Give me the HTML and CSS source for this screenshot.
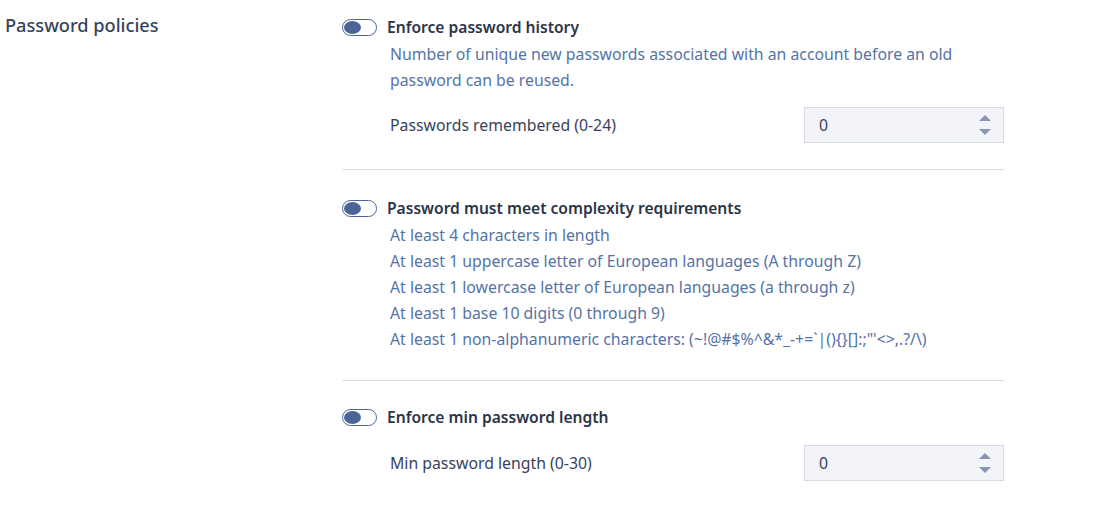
FILE: index.html
```html
<!DOCTYPE html>
<html>
<head>
<meta charset="utf-8">
<link rel="stylesheet" href="styles.css">
</head>
<body>
<div class="page">
  <div class="side-label">Password policies</div>
  <div class="policies">
    <section class="policy first">
      <div class="policy-head">
        <span class="toggle"><span class="knob"></span></span>
        <span class="policy-title">Enforce password history</span>
      </div>
      <div class="policy-body">
        <p class="desc">Number of unique new passwords associated with an account before an old password can be reused.</p>
        <div class="field">
          <span class="field-label">Passwords remembered (0-24)</span>
          <div class="num-input"><span class="num-value">0</span><span class="spin"><span class="up"></span><span class="down"></span></span></div>
        </div>
      </div>
    </section>
    <section class="policy second">
      <div class="policy-head">
        <span class="toggle"><span class="knob"></span></span>
        <span class="policy-title">Password must meet complexity requirements</span>
      </div>
      <ul class="reqs">
        <li>At least 4 characters in length</li>
        <li>At least 1 uppercase letter of European languages (A through Z)</li>
        <li>At least 1 lowercase letter of European languages (a through z)</li>
        <li>At least 1 base 10 digits (0 through 9)</li>
        <li>At least 1 non-alphanumeric characters: (~!@#$%^&amp;*_-+=`|(){}[]:;"'&lt;&gt;,.?/\)</li>
      </ul>
    </section>
    <section class="policy third">
      <div class="policy-head">
        <span class="toggle"><span class="knob"></span></span>
        <span class="policy-title">Enforce min password length</span>
      </div>
      <div class="policy-body">
        <div class="field">
          <span class="field-label">Min password length (0-30)</span>
          <div class="num-input"><span class="num-value">0</span><span class="spin"><span class="up"></span><span class="down"></span></span></div>
        </div>
      </div>
    </section>
  </div>
</div>
</body>
</html>
```
FILE: styles.css
```css
html, body {
  margin: 0;
  padding: 0;
  background: #ffffff;
}
body {
  font-family: "Noto Sans", "Liberation Sans", sans-serif;
  color: #2f3b52;
}
.page {
  display: grid;
  grid-template-columns: 342px 662px;
}
.side-label {
  padding-left: 5px;
  padding-top: 13px;
  font-size: 18.2px;
  line-height: 24px;
  font-weight: 500;
  color: #36435c;
}
.policy {
  border-bottom: 1px solid #dadde5;
}
.policy.third {
  border-bottom: none;
}
.policy.first {
  padding-top: 15px;
  padding-bottom: 26px;
}
.policy.second {
  padding-top: 26px;
  padding-bottom: 28px;
}
.policy.third {
  padding-top: 24px;
}
.policy-head {
  display: flex;
  align-items: center;
  height: 24px;
  gap: 10px;
}
.toggle {
  position: relative;
  width: 33px;
  height: 15px;
  border: 1.5px solid #4b6597;
  border-radius: 9px;
  flex: none;
}
.knob {
  position: absolute;
  left: 1px;
  top: 1px;
  width: 17px;
  height: 13px;
  border-radius: 50%;
  background: #4b6597;
}
.policy-title {
  font-size: 15.6px;
  font-weight: 600;
  color: #2c3548;
}
.policy-body {
  padding-left: 48px;
}
.desc {
  margin: 2px 0 0;
  font-size: 15.8px;
  line-height: 26px;
  color: #5573a6;
}
.field {
  display: flex;
  align-items: center;
  justify-content: space-between;
  margin-top: 14px;
}
.third .field {
  margin-top: 16px;
}
.field-label {
  font-size: 15.8px;
  color: #36435c;
}
.num-input {
  box-sizing: border-box;
  width: 200px;
  height: 36px;
  background: #f3f4f9;
  border: 1px solid #d6dae4;
  display: flex;
  align-items: center;
  justify-content: space-between;
  padding: 0 12px 0 14px;
}
.num-value {
  font-size: 15.8px;
  color: #36435c;
}
.spin {
  display: flex;
  flex-direction: column;
  gap: 8px;
}
.up, .down {
  width: 0;
  height: 0;
  border-left: 6px solid transparent;
  border-right: 6px solid transparent;
}
.up {
  border-bottom: 6px solid #8896b4;
}
.down {
  border-top: 6px solid #8896b4;
}
.reqs {
  list-style: none;
  margin: 2px 0 0;
  padding: 0 0 0 48px;
  font-size: 15.8px;
  line-height: 26px;
  color: #5573a6;
}
```
